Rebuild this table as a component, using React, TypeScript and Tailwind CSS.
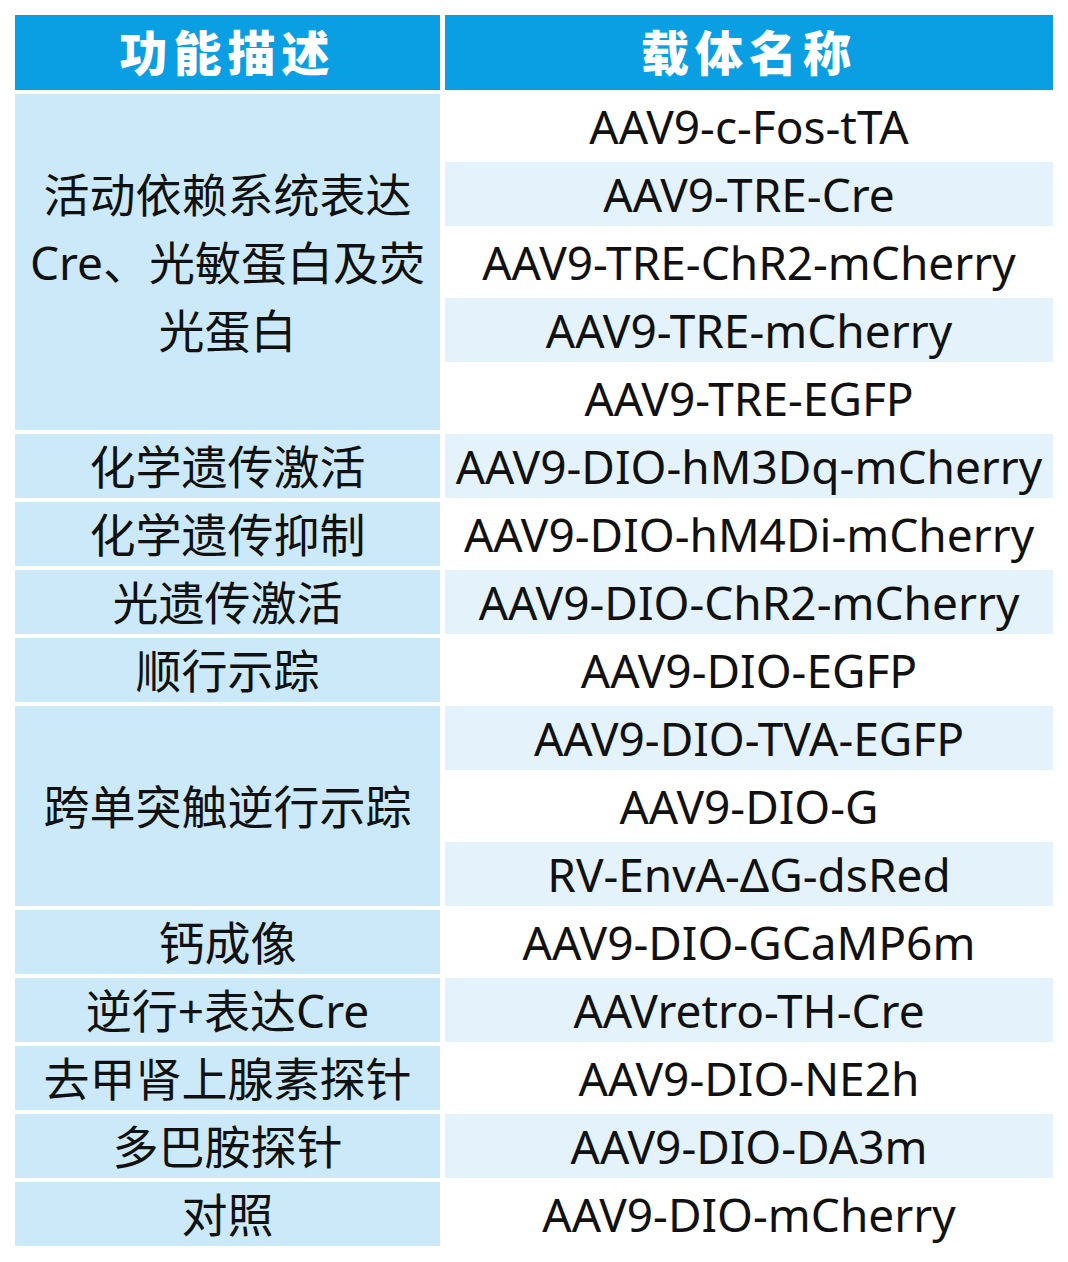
const vectors = [
  "AAV9-c-Fos-tTA",
  "AAV9-TRE-Cre",
  "AAV9-TRE-ChR2-mCherry",
  "AAV9-TRE-mCherry",
  "AAV9-TRE-EGFP",
  "AAV9-DIO-hM3Dq-mCherry",
  "AAV9-DIO-hM4Di-mCherry",
  "AAV9-DIO-ChR2-mCherry",
  "AAV9-DIO-EGFP",
  "AAV9-DIO-TVA-EGFP",
  "AAV9-DIO-G",
  "RV-EnvA-ΔG-dsRed",
  "AAV9-DIO-GCaMP6m",
  "AAVretro-TH-Cre",
  "AAV9-DIO-NE2h",
  "AAV9-DIO-DA3m",
  "AAV9-DIO-mCherry",
];

// function label -> how many vector rows it covers
const functions: { label: string[]; span: number }[] = [
  { label: ["活动依赖系统表达", "Cre、光敏蛋白及荧", "光蛋白"], span: 5 },
  { label: ["化学遗传激活"], span: 1 },
  { label: ["化学遗传抑制"], span: 1 },
  { label: ["光遗传激活"], span: 1 },
  { label: ["顺行示踪"], span: 1 },
  { label: ["跨单突触逆行示踪"], span: 3 },
  { label: ["钙成像"], span: 1 },
  { label: ["逆行+表达Cre"], span: 1 },
  { label: ["去甲肾上腺素探针"], span: 1 },
  { label: ["多巴胺探针"], span: 1 },
  { label: ["对照"], span: 1 },
];

const spanClass: Record<number, string> = {
  1: "row-span-1",
  3: "row-span-3",
  5: "row-span-5",
};

export default function App() {
  let start = 2;
  const leftCells = functions.map((f, i) => {
    const rowStart = start;
    start += f.span;
    return (
      <div
        key={i}
        className={`col-start-1 ${spanClass[f.span]} bg-[#cbe9f8] flex flex-col items-center justify-center leading-[68px]`}
        style={{ gridRowStart: rowStart }}
      >
        {f.label.map((l) => (
          <div key={l}>{l}</div>
        ))}
      </div>
    );
  });

  return (
    <div
      className="w-[1068px] h-[1262px] bg-white pt-[15px] pl-[15px] text-[#111] text-[46px]"
      style={{ fontFamily: '"Noto Sans", "Noto Sans CJK SC", sans-serif' }}
    >
      <div className="grid grid-cols-[425px_608px] grid-rows-[75px_repeat(17,64px)] gap-x-[5px] gap-y-[4px]">
        <div className="row-start-1 col-start-1 bg-[#0a9fe2] text-white font-black text-[48px] tracking-[6px] flex items-center justify-center">
          功能描述
        </div>
        <div className="row-start-1 col-start-2 bg-[#0a9fe2] text-white font-black text-[48px] tracking-[6px] flex items-center justify-center">
          载体名称
        </div>
        {leftCells}
        {vectors.map((v, i) => (
          <div
            key={v}
            className={`col-start-2 flex items-center justify-center ${
              i % 2 === 1 ? "bg-[#e4f2fb]" : "bg-white"
            }`}
            style={{ gridRowStart: i + 2 }}
          >
            {v}
          </div>
        ))}
      </div>
    </div>
  );
}
